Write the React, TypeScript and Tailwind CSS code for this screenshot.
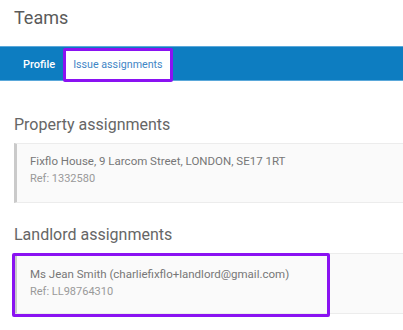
export default function App() {
  return (
    <div className="w-[403px] h-[330px] overflow-hidden bg-white font-['Roboto',sans-serif]">
      <h1 className="pl-[14px] pt-[6px] mb-[16px] text-[18px] leading-[24px] text-[#5a5a5a]">
        Teams
      </h1>

      <nav className="h-[35px] flex items-end pl-[14px] bg-[#0d7dc1] border-y border-[#5aa8da]">
        <a className="h-[34px] -mb-[2px] flex items-center pl-[9px] pr-[8px] text-[11px] font-medium text-white">
          Profile
        </a>
        <a className="relative h-[34px] -mb-[2px] flex items-center px-[7px] bg-white border-[3px] border-[#8a12f2] rounded-[2px] text-[10.7px] text-[#3f86c6]">
          Issue assignments
        </a>
      </nav>

      <section className="pl-[14px] pt-[32px]">
        <h2 className="text-[16px] leading-[24px] text-[#666] mb-[6px]">Property assignments</h2>
        <div className="bg-[#fafafa] border-y border-[#ececec] border-l-[3px] border-l-[#cacaca] pl-[13px] pt-[9px] pb-[15px] leading-[17px]">
          <p className="text-[11.5px] text-[#777]">Fixflo House, 9 Larcom Street, LONDON, SE17 1RT</p>
          <p className="text-[11px] text-[#999]">Ref: 1332580</p>
        </div>
      </section>

      <section className="pl-[14px] pt-[20px]">
        <h2 className="text-[16px] leading-[24px] text-[#666] mb-[6px]">Landlord assignments</h2>
        <div className="relative bg-[#fafafa] border-y border-[#ececec] border-l-[3px] border-l-[#cacaca] pl-[13px] pt-[12px] pb-[13px] leading-[17px]">
          <p className="text-[11.5px] text-[#777]">Ms Jean Smith (charliefixflo+landlord@gmail.com)</p>
          <p className="text-[11px] text-[#999]">Ref: LL98764310</p>
          <div className="absolute -left-[5px] -top-[1px] w-[318px] h-[64px] border-[3px] border-[#8a12f2] rounded-[2px]" />
        </div>
      </section>
    </div>
  );
}
